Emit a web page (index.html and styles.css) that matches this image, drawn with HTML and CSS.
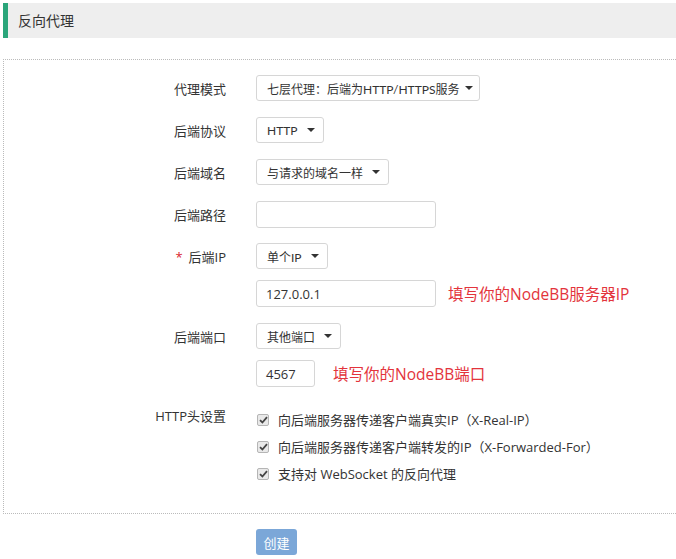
FILE: index.html
```html
<!DOCTYPE html>
<html lang="zh">
<head>
<meta charset="utf-8">
<link rel="stylesheet" href="styles.css">
</head>
<body>
<div class="page">
  <div class="title-bar">反向代理</div>
  <div class="form-box">
    <div class="row">
      <div class="label">代理模式</div>
      <div class="select w224">七层代理：后端为HTTP/HTTPS服务<span class="caret"></span></div>
    </div>
    <div class="row">
      <div class="label">后端协议</div>
      <div class="select">HTTP<span class="caret"></span></div>
    </div>
    <div class="row">
      <div class="label">后端域名</div>
      <div class="select">与请求的域名一样<span class="caret"></span></div>
    </div>
    <div class="row">
      <div class="label">后端路径</div>
      <div class="input w180"></div>
    </div>
    <div class="row">
      <div class="label"><span class="req">*</span>后端IP</div>
      <div class="select">单个IP<span class="caret"></span></div>
    </div>
    <div class="row sub">
      <div class="label"></div>
      <div class="input w180">127.0.0.1</div>
      <div class="hint">填写你的NodeBB服务器IP</div>
    </div>
    <div class="row">
      <div class="label">后端端口</div>
      <div class="select">其他端口<span class="caret"></span></div>
    </div>
    <div class="row sub">
      <div class="label"></div>
      <div class="input w59">4567</div>
      <div class="hint wide">填写你的NodeBB端口</div>
    </div>
    <div class="row top">
      <div class="label lbl-http">HTTP头设置</div>
      <div class="checks">
        <div class="check"><span class="box"><svg width="9" height="8" viewBox="0 0 9 8"><path d="M1 4.2 L3.4 6.5 L8 1.2" fill="none" stroke="#444" stroke-width="1.8"/></svg></span>向后端服务器传递客户端真实IP（X-Real-IP）</div>
        <div class="check"><span class="box"><svg width="9" height="8" viewBox="0 0 9 8"><path d="M1 4.2 L3.4 6.5 L8 1.2" fill="none" stroke="#444" stroke-width="1.8"/></svg></span>向后端服务器传递客户端转发的IP（X-Forwarded-For）</div>
        <div class="check"><span class="box"><svg width="9" height="8" viewBox="0 0 9 8"><path d="M1 4.2 L3.4 6.5 L8 1.2" fill="none" stroke="#444" stroke-width="1.8"/></svg></span>支持对 WebSocket 的反向代理</div>
      </div>
    </div>
  </div>
  <div class="actions">
    <div class="btn">创建</div>
  </div>
</div>
</body>
</html>
```

FILE: styles.css
```css
* { box-sizing: border-box; }
html, body { margin: 0; padding: 0; background: #fff; }
body {
  font-family: "Open Sans", "Noto Sans CJK SC", sans-serif;
  font-size: 13px;
  color: #333;
}
.page { padding: 3px 0 0 3px; }
.title-bar {
  height: 35px;
  background: #eeeeee;
  border-left: 5px solid #2aa57a;
  padding-left: 10px;
  line-height: 35px;
  font-size: 14px;
  color: #333;
}
.form-box {
  margin-top: 21px;
  border-top: 1px dotted #bbb;
  border-left: 1px dotted #bbb;
  border-bottom: 1px dotted #bbb;
  padding: 15px 0 26px 0;
}
.row {
  display: flex;
  align-items: center;
  height: 26px;
  margin-bottom: 16px;
}
.row.sub { margin-top: -5px; height: 27px; }
.row.top {
  align-items: flex-start;
  height: auto;
  margin-top: 24px;
  margin-bottom: 0;
}
.label {
  width: 222px;
  text-align: right;
  margin-right: 30px;
  color: #333;
  flex: none;
}
.lbl-http { line-height: 16px; margin-top: -3px; }
.req { color: #d9232d; margin-right: 6px; font-size: 13px; }
.select {
  height: 26px;
  border: 1px solid #d6d6d6;
  border-radius: 3px;
  padding: 0 8px 0 10px;
  display: flex;
  align-items: center;
  font-family: "Lato", "Noto Sans CJK SC", sans-serif;
  font-size: 12px;
  color: #333;
  white-space: nowrap;
}
.select.w224 { width: 224px; justify-content: space-between; padding-right: 9px; }
.select.w224 .caret { margin-left: 6px; }
.caret {
  display: inline-block;
  width: 0; height: 0;
  border-left: 4px solid transparent;
  border-right: 4px solid transparent;
  border-top: 4px solid #333;
  margin-left: 9px;
}
.input {
  height: 27px;
  border: 1px solid #d6d6d6;
  border-radius: 3px;
  padding: 0 9px;
  display: flex;
  align-items: center;
  font-size: 13px;
  color: #333;
}
.w180 { width: 180px; }
.w59 { width: 59px; }
.hint {
  margin-left: 12px;
  color: #e3343c;
  font-size: 15.5px;
}
.hint.wide { margin-left: 18px; }
.checks { display: flex; flex-direction: column; margin-top: -5px; }
.check {
  display: flex;
  align-items: center;
  height: 27px;
  font-size: 13px;
  color: #333;
}
.box {
  width: 12px; height: 12px;
  border: 1px solid #b5b5b5;
  background: #e9e9e9;
  border-radius: 2px;
  display: inline-flex;
  align-items: center;
  justify-content: center;
  margin: 0 9px 0 1px;
}
.actions { padding: 15px 0 0 253px; }
.btn {
  width: 41px;
  height: 26px;
  background: #7ba7d8;
  border-radius: 3px;
  color: #fff;
  font-size: 13px;
  display: flex;
  align-items: center;
  justify-content: center;
}
```
